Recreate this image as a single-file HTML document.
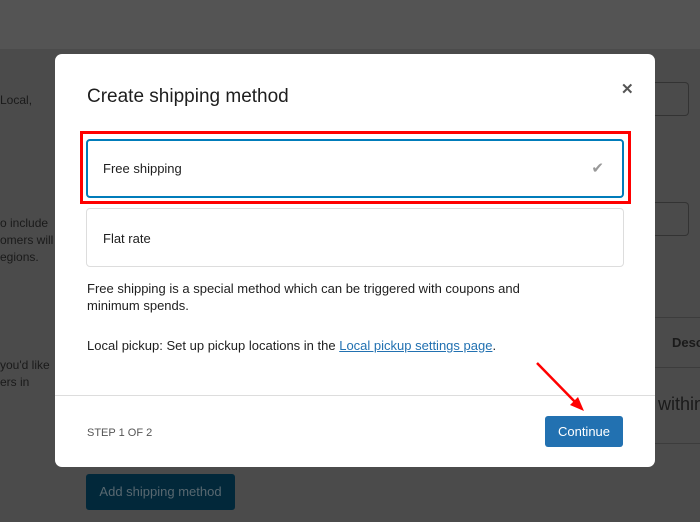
<!DOCTYPE html>
<html><head><style>
body{margin:0;width:700px;height:522px;overflow:hidden;background:#4b4b4b;font-family:"Liberation Sans",sans-serif;position:relative}
.top{position:absolute;left:0;top:0;width:700px;height:49px;background:#545454}
.a{position:absolute;font-size:12px;color:#1a1a1a;line-height:17px}
.modal{position:absolute;left:55px;top:54px;width:600px;height:413px;background:#fff;border-radius:7px}
.t{position:absolute;left:32px;top:32px;font-size:19px;color:#1e1e1e}
.x{position:absolute;left:566px;top:26px;font-size:15px;color:#555;font-weight:bold}
.red{position:absolute;left:25px;top:77px;width:545px;height:67px;border:3px solid #f00}
.opt{position:absolute;left:31px;width:536px;border:1px solid #ddd;border-radius:4px;font-size:13px;color:#1e1e1e}
.p{position:absolute;left:32px;font-size:13px;color:#1e1e1e;line-height:17px}
</style></head><body>
<div class="top"></div>
<div class="a" style="left:0;top:92px">Local,</div>
<div class="a" style="left:0;top:215px">o include<br>omers will<br>egions.</div>
<div class="a" style="left:0;top:357px">you'd like<br>ers in</div>
<div style="position:absolute;left:655px;top:82px;width:33px;height:32px;border:1px solid #333;border-left:none;border-radius:0 4px 4px 0"></div>
<div style="position:absolute;left:655px;top:202px;width:33px;height:32px;border:1px solid #333;border-left:none;border-radius:0 4px 4px 0"></div>
<div style="position:absolute;left:655px;top:317px;width:45px;border-top:1px solid #3c3c3c;height:49px;border-bottom:1px solid #3c3c3c"></div>
<div style="position:absolute;left:655px;top:443px;width:45px;border-top:1px solid #3c3c3c"></div>
<div class="a" style="left:672px;top:334px;font-size:13px;font-weight:bold;color:#1a1a1a">Desc</div>
<div class="a" style="left:658px;top:396px;font-size:18px;color:#1a1a1a">within</div>
<div style="position:absolute;left:86px;top:474px;width:149px;height:36px;background:#02283a;border-radius:3px;color:#586870;font-size:13px;line-height:36px;text-align:center">Add shipping method</div>
<div class="modal">
<div class="t">Create shipping method</div>
<div class="x">✕</div>
<div class="red"></div>
<div class="opt" style="top:85px;height:55px;border:2px solid #007cba;left:31px;width:534px"><span style="position:absolute;left:15px;top:20px">Free shipping</span><span style="position:absolute;right:18px;top:18px;color:#999;font-size:15px">✔</span></div>
<div class="opt" style="top:154px;height:57px"><span style="position:absolute;left:16px;top:22px">Flat rate</span></div>
<div class="p" style="top:226px">Free shipping is a special method which can be triggered with coupons and<br>minimum spends.</div>
<div class="p" style="top:283px">Local pickup: Set up pickup locations in the <span style="color:#2271b1;text-decoration:underline">Local pickup settings page</span>.</div>
<div style="position:absolute;left:0;top:341px;width:600px;border-top:1px solid #ddd"></div>
<div class="p" style="top:371px;font-size:11px;color:#555">STEP 1 OF 2</div>
<div style="position:absolute;left:490px;top:362px;width:78px;height:31px;background:#2271b1;border-radius:3px;color:#fff;font-size:13px;line-height:31px;text-align:center">Continue</div>
</div>
<svg style="position:absolute;left:0;top:0" width="700" height="522"><line x1="537" y1="363" x2="578" y2="405" stroke="#f00" stroke-width="2.5"/><polygon points="584,411 570,405 578,397" fill="#f00"/></svg>
</body></html>
